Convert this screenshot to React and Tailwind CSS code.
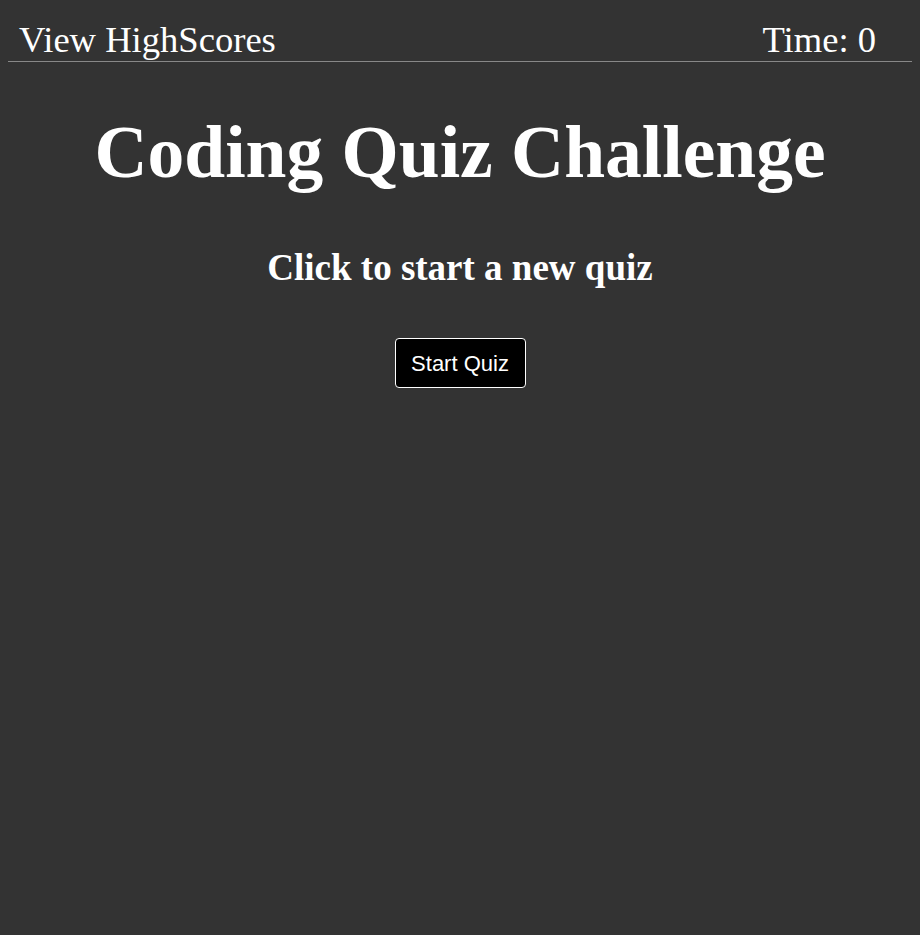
export default function App() {
  return (
    <div className="min-h-[935px] bg-[#333333] px-2 font-['Liberation_Serif',serif] text-white">
      <header className="flex items-center justify-between border-b border-[#888888] pl-[11px] pr-[36px] pt-[19px] leading-[42px]">
        <span className="text-[36.6px]">View HighScores</span>
        <span className="text-[36.6px]">Time: 0</span>
      </header>

      <main className="flex flex-col items-center text-center">
        <h1 className="mt-[41px] text-[73.5px] font-bold leading-[100px]">Coding Quiz Challenge</h1>
        <h2 className="mt-[45px] text-[37px] font-bold leading-[40px]">Click to start a new quiz</h2>
        <button className="mt-[50px] h-[50px] w-[131px] rounded-[4px] border border-white bg-black font-['Liberation_Sans',sans-serif] text-[22px]">
          Start Quiz
        </button>
      </main>
    </div>
  )
}
